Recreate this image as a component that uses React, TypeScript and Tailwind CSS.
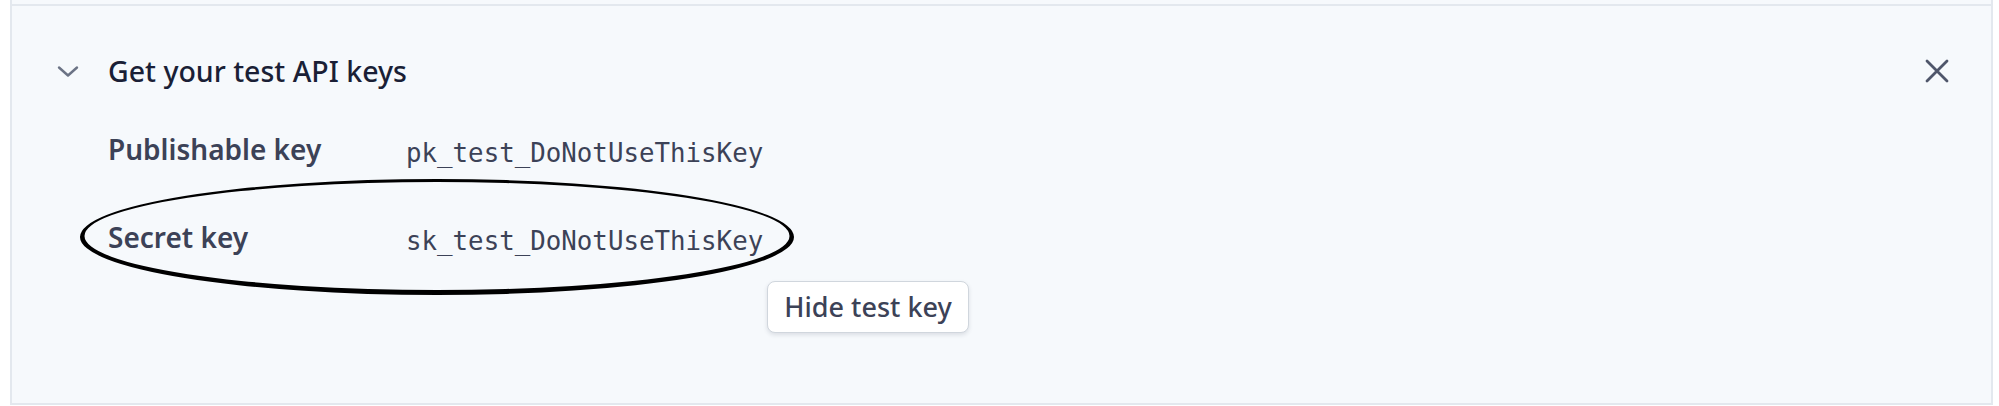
import React from "react";

function Chevron() {
  return (
    <svg width="24" height="24" viewBox="0 0 24 24" fill="none" stroke="#6b7385" strokeWidth="2.4" strokeLinecap="round" strokeLinejoin="round">
      <path d="M3 8.5 L12 16.5 L21 8.5" />
    </svg>
  );
}

function CloseX() {
  return (
    <svg width="24" height="24" viewBox="0 0 24 24" fill="none" stroke="#4f566b" strokeWidth="2.8" strokeLinecap="round">
      <path d="M2 2 L22 22 M22 2 L2 22" />
    </svg>
  );
}

export default function App() {
  return (
    <div className="relative h-[406px] w-[1999px] bg-white pl-[10px] pr-[6px] font-['Noto_Sans',sans-serif]">
      <div className="h-[405px] border-x-2 border-b-2 border-[#e3e8ee] bg-[#f6f9fc] pt-[4px]">
        <div className="border-t-2 border-[#e3e8ee]">
          <div className="mt-[47px] flex h-[36px] items-center justify-between pl-[44px] pr-[42px]">
            <div className="flex items-center gap-[28px]">
              <Chevron />
              <span className="text-[28.5px] leading-[36px] font-medium text-[#1a1f36]">Get your test API keys</span>
            </div>
            <CloseX />
          </div>
          <div className="mt-[42px] grid grid-cols-[298px_auto] gap-y-[48px] pl-[96px]">
            <div className="text-[28px] leading-[36px] font-semibold text-[#3c4257]">Publishable key</div>
            <div className="pt-[4px] font-['DejaVu_Sans_Mono',monospace] text-[25.8px] leading-[36px] text-[#3c4257]">pk_test_DoNotUseThisKey</div>
            <div className="text-[28px] leading-[36px] font-semibold text-[#3c4257]">Secret key</div>
            <div className="pt-[4px] font-['DejaVu_Sans_Mono',monospace] text-[25.8px] leading-[36px] text-[#3c4257]">sk_test_DoNotUseThisKey</div>
          </div>
          <div className="mt-[22px] pl-[755px]">
            <button className="h-[52px] w-[202px] rounded-[8px] border border-[#d0d6dd] bg-white text-[27px] font-medium leading-[36px] text-[#3c4257] shadow-[0_2px_4px_rgba(60,66,87,0.14)]">
              Hide test key
            </button>
          </div>
        </div>
      </div>
      <svg className="pointer-events-none absolute left-[70px] top-[170px]" width="740" height="135" viewBox="0 0 740 135">
        <path
          fillRule="evenodd"
          fill="#000"
          d="M10 67 A357 58 0 1 0 724 67 A357 58 0 1 0 10 67 Z M14.5 66 A352.5 54 0 1 0 719.5 66 A352.5 54 0 1 0 14.5 66 Z"
        />
      </svg>
    </div>
  );
}
